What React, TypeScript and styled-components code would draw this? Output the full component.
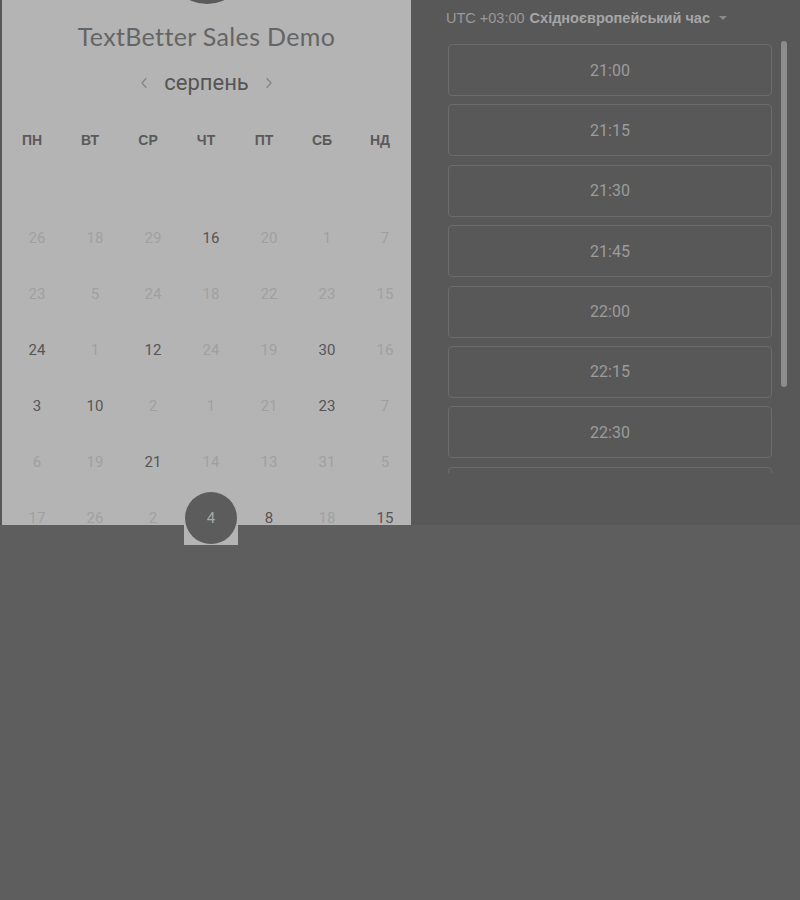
import React from "react";
import styled, { createGlobalStyle } from "styled-components";

const GlobalStyle = createGlobalStyle`
  html, body { margin: 0; padding: 0; background: #5e5e5e; }
  body { font-family: "Liberation Sans", Arial, sans-serif; overflow: hidden; }
  * { box-sizing: border-box; }
`;

const Page = styled.div`
  width: 800px;
  height: 900px;
  display: flex;
  flex-direction: column;
  background: #5e5e5e;
`;

const Top = styled.div`
  height: 525px;
  display: flex;
  padding-left: 2px;
  background: #585858;
  flex-shrink: 0;
`;

const CalendarPanel = styled.section`
  width: 409px;
  height: 100%;
  background: #b4b4b4;
  display: flex;
  flex-direction: column;
  align-items: center;
`;

const Avatar = styled.div`
  width: 80px;
  height: 80px;
  border-radius: 50%;
  background: #5a5a5a;
  margin-top: -76px;
  flex-shrink: 0;
`;

const Title = styled.h1`
  margin: 16px 0 0;
  font-family: Lato, "Liberation Sans", sans-serif;
  font-weight: 400;
  font-size: 25px;
  letter-spacing: 0.35px;
  line-height: 32px;
  color: #656565;
`;

const MonthNav = styled.div`
  margin-top: 18px;
  height: 32px;
  display: flex;
  align-items: center;
  gap: 16px;
`;

const NavArrow = styled.span`
  display: flex;
  width: 8px;
  height: 12px;
  color: #888888;
`;

const MonthName = styled.span`
  font-family: Roboto, "Liberation Sans", sans-serif;
  font-size: 22px;
  color: #555555;
`;

const WeekHeader = styled.div`
  margin-top: 35px;
  align-self: stretch;
  padding-left: 1px;
  display: grid;
  grid-template-columns: repeat(7, 58px);
  height: 20px;
`;

const WeekDay = styled.span`
  text-align: center;
  font-weight: 700;
  font-size: 14px;
  line-height: 20px;
  color: #5a5a5a;
`;

const DateGrid = styled.div`
  margin-top: 61px;
  align-self: stretch;
  padding-left: 8px;
  display: grid;
  grid-template-columns: repeat(7, 54px);
  grid-auto-rows: 54px;
  column-gap: 4px;
  row-gap: 2px;
`;

const DateCell = styled.div<{ $active?: boolean; $selected?: boolean }>`
  display: flex;
  align-items: center;
  justify-content: center;
  font-family: Roboto, "Liberation Sans", sans-serif;
  font-size: 15px;
  color: ${(p) => (p.$active ? "#545454" : "#a0a0a0")};
  ${(p) =>
    p.$selected &&
    `
    position: relative;
    z-index: 2;
    background: #b4b4b4;
  `}
`;

const SelectedDot = styled.span`
  width: 52px;
  height: 52px;
  border-radius: 50%;
  background: #5c5c5c;
  color: #a8a8a8;
  display: flex;
  align-items: center;
  justify-content: center;
`;

const SlotsPanel = styled.section`
  flex: 1;
  padding-left: 35px;
  display: flex;
  flex-direction: column;
`;

const TimezoneRow = styled.div`
  margin-top: 8px;
  height: 20px;
  display: flex;
  align-items: center;
  gap: 5px;
  font-size: 14.5px;
  color: #9a9a9a;
  white-space: nowrap;
`;

const ZoneName = styled.b`
  color: #a6a6a6;
  font-weight: 700;
`;

const Caret = styled.span`
  margin-left: 4px;
  width: 0;
  height: 0;
  border-left: 4px solid transparent;
  border-right: 4px solid transparent;
  border-top: 4px solid #8a8a8a;
`;

const SlotsViewport = styled.div`
  position: relative;
  margin-top: 12px;
  height: 433px;
  overflow: hidden;
`;

const SlotsList = styled.div`
  padding: 4px 0 0 2px;
  width: 326px;
  display: flex;
  flex-direction: column;
  gap: 8.4px;
`;

const Slot = styled.div`
  height: 52px;
  flex-shrink: 0;
  border: 1px solid #6c6c6c;
  border-radius: 4px;
  display: flex;
  align-items: center;
  justify-content: center;
  font-family: Roboto, "Liberation Sans", sans-serif;
  font-size: 16px;
  color: #9c9c9c;
`;

const Scrollbar = styled.div`
  position: absolute;
  left: 335px;
  top: 1px;
  width: 6px;
  height: 346px;
  border-radius: 3px;
  background: #8c8c8c;
`;

const Bottom = styled.div`
  position: relative;
  z-index: 1;
  flex: 1;
  background: #5e5e5e;
`;

const Chevron = ({ dir }: { dir: "left" | "right" }) => (
  <svg width="8" height="12" viewBox="0 0 8 12" fill="none">
    <path
      d={dir === "left" ? "M6 1.5 L2 6 L6 10.5" : "M2 1.5 L6 6 L2 10.5"}
      stroke="currentColor"
      strokeWidth="1.4"
      strokeLinecap="round"
      strokeLinejoin="round"
    />
  </svg>
);

const weekDays = ["ПН", "ВТ", "СР", "ЧТ", "ПТ", "СБ", "НД"];

type Cell = { n: number; a?: boolean; s?: boolean };
const rows: Cell[][] = [
  [{ n: 26 }, { n: 18 }, { n: 29 }, { n: 16, a: true }, { n: 20 }, { n: 1 }, { n: 7 }],
  [{ n: 23 }, { n: 5 }, { n: 24 }, { n: 18 }, { n: 22 }, { n: 23 }, { n: 15 }],
  [{ n: 24, a: true }, { n: 1 }, { n: 12, a: true }, { n: 24 }, { n: 19 }, { n: 30, a: true }, { n: 16 }],
  [{ n: 3, a: true }, { n: 10, a: true }, { n: 2 }, { n: 1 }, { n: 21 }, { n: 23, a: true }, { n: 7 }],
  [{ n: 6 }, { n: 19 }, { n: 21, a: true }, { n: 14 }, { n: 13 }, { n: 31 }, { n: 5 }],
  [{ n: 17 }, { n: 26 }, { n: 2 }, { n: 4, s: true }, { n: 8, a: true }, { n: 18 }, { n: 15, a: true }],
];

const slots = ["21:00", "21:15", "21:30", "21:45", "22:00", "22:15", "22:30", "22:45"];

export default function App() {
  return (
    <>
      <GlobalStyle />
      <Page>
        <Top>
          <CalendarPanel>
            <Avatar />
            <Title>TextBetter Sales Demo</Title>
            <MonthNav>
              <NavArrow>
                <Chevron dir="left" />
              </NavArrow>
              <MonthName>серпень</MonthName>
              <NavArrow>
                <Chevron dir="right" />
              </NavArrow>
            </MonthNav>
            <WeekHeader>
              {weekDays.map((d) => (
                <WeekDay key={d}>{d}</WeekDay>
              ))}
            </WeekHeader>
            <DateGrid>
              {rows.flat().map((c, i) => (
                <DateCell key={i} $active={c.a} $selected={c.s}>
                  {c.s ? <SelectedDot>{c.n}</SelectedDot> : c.n}
                </DateCell>
              ))}
            </DateGrid>
          </CalendarPanel>
          <SlotsPanel>
            <TimezoneRow>
              <span>UTC +03:00</span>
              <ZoneName>Східноєвропейський час</ZoneName>
              <Caret />
            </TimezoneRow>
            <SlotsViewport>
              <SlotsList>
                {slots.map((s) => (
                  <Slot key={s}>{s}</Slot>
                ))}
              </SlotsList>
              <Scrollbar />
            </SlotsViewport>
          </SlotsPanel>
        </Top>
        <Bottom />
      </Page>
    </>
  );
}
